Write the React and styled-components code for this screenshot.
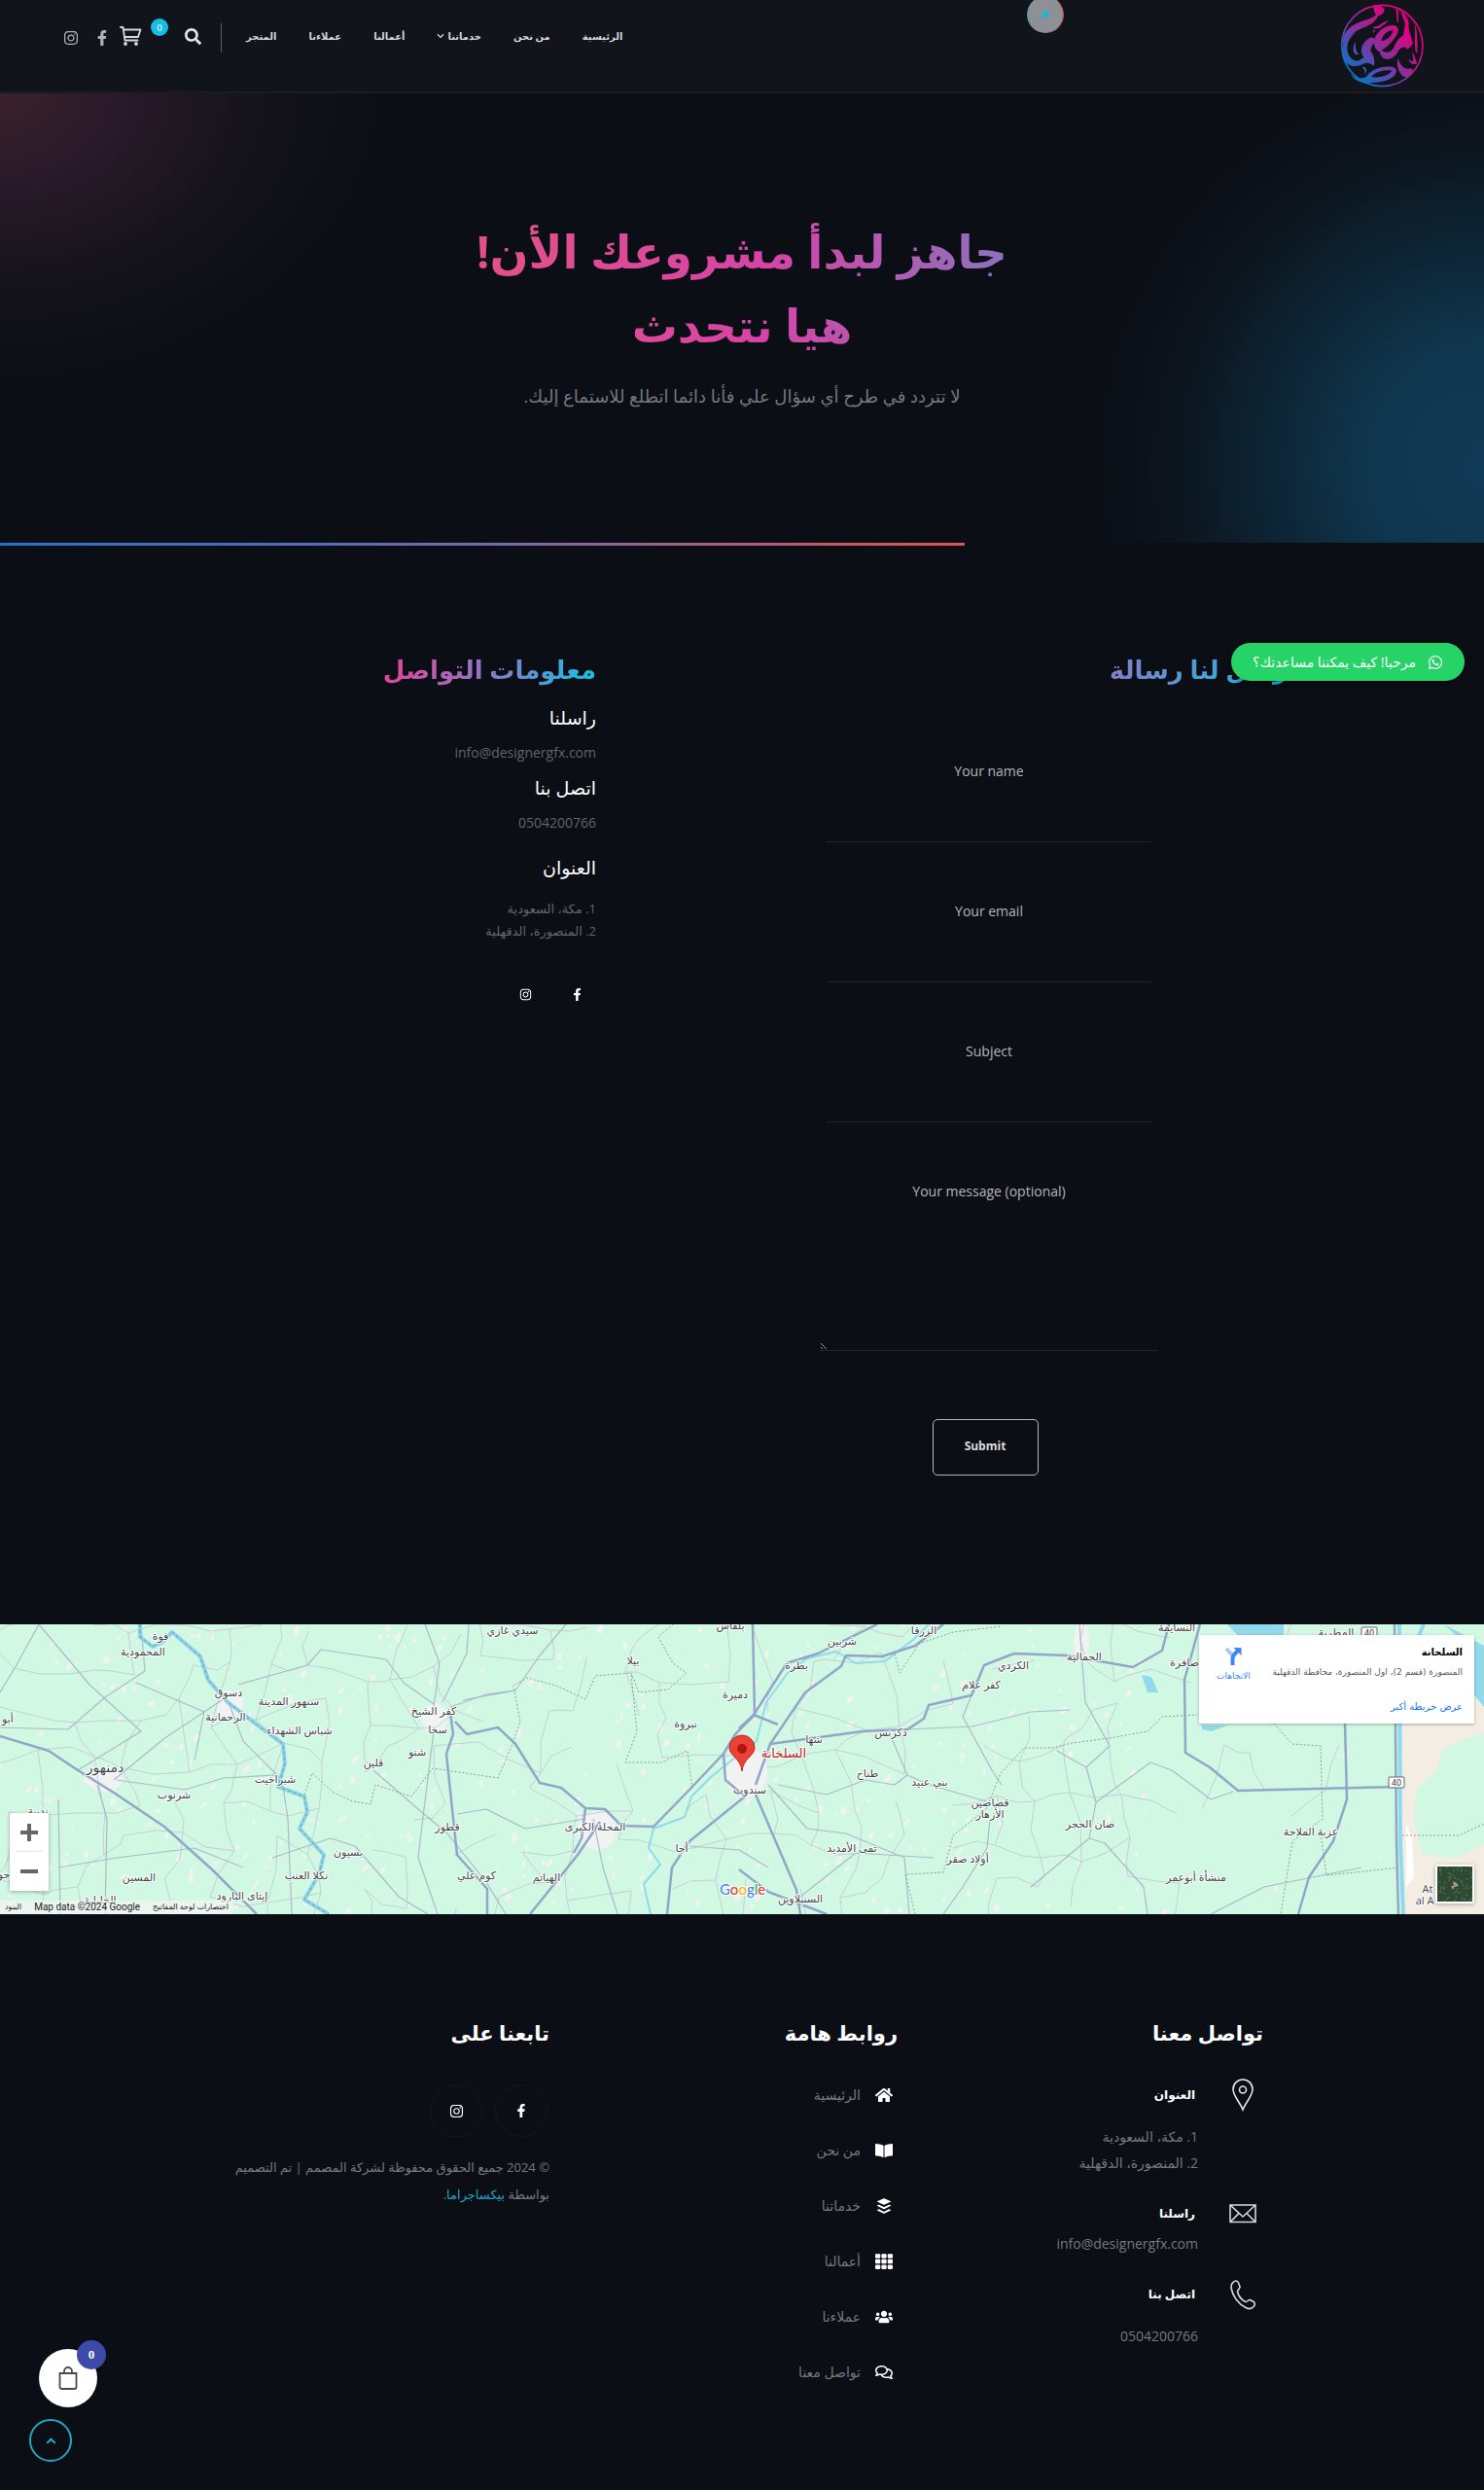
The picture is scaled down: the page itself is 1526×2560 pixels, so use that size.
import React from 'react';
import styled, { createGlobalStyle } from 'styled-components';
import {
  FaBookOpen,
  FaBuffer,
  FaChevronDown,
  FaChevronUp,
  FaFacebookF,
  FaHome,
  FaInstagram,
  FaRegComments,
  FaSearch,
  FaTh,
  FaUsers,
  FaWhatsapp,
} from 'react-icons/fa';

const GlobalStyle = createGlobalStyle`
  * {
    box-sizing: border-box;
  }
  body {
    margin: 0;
    background: #0b0e15;
    color: #fff;
    font-family: 'Open Sans', 'DejaVu Sans', sans-serif;
    font-size: 14px;
  }
  a {
    color: inherit;
    text-decoration: none;
  }
  h1, h2, h3, p, ul {
    margin: 0;
    padding: 0;
  }
  ul {
    list-style: none;
  }
`;

const Page = styled.div`
  position: relative;
  overflow: hidden;
`;

/* ---------- header ---------- */

const Bar = styled.header`
  display: flex;
  justify-content: space-between;
  align-items: flex-start;
  height: 96px;
  padding: 0 56px 0 65px;
  background: #11141b;
  border-bottom: 2px solid #191c20;
`;

const Tools = styled.div`
  display: flex;
  align-items: center;
  padding-top: 20px;
  color: #c3c5c8;
`;

const Nav = styled.nav`
  display: flex;
  gap: 33px;
  color: #d5d6d8;
  font-size: 10px;
  font-weight: bold;
  line-height: 34px;
`;

const NavLink = styled.a`
  display: flex;
  align-items: center;
  gap: 3px;
`;

const Divider = styled.span`
  width: 1px;
  height: 30px;
  margin: 4px 25px 0 20px;
  background: #5c5f64;
`;

const IconButton = styled.button`
  display: flex;
  padding: 0;
  border: 0;
  background: none;
  color: #e4e5e6;
`;

const CartLink = styled.a`
  display: flex;
  gap: 9px;
  margin: 0 17px 0 10px;
`;

const CartCount = styled.span`
  width: 18px;
  height: 18px;
  margin-top: -8px;
  border-radius: 50%;
  background: #16bde4;
  color: #fff;
  font: 11px/18px 'Liberation Serif', serif;
  text-align: center;
`;

const SocialLink = styled.a`
  display: flex;
  margin-left: ${props => props.$gap || 0}px;
  margin-top: 3px;
  color: #b0b2b5;
`;

const Cursor = styled.span`
  position: absolute;
  top: -4px;
  left: 1056px;
  width: 38px;
  height: 38px;
  border-radius: 50%;
  border: 1px solid;
  border-color: #8d9094 #c04a58 #8d9094 #3fa9b8;
  background: radial-gradient(circle, #1fb5d6 0 3px, #8d9094 4px);
`;

/* ---------- hero ---------- */

const Hero = styled.section`
  height: 465px;
  padding-top: 124px;
  text-align: center;
  background:
    linear-gradient(to right, #2672c8, #7568b0 50%, #e0544f) left bottom / 65% 3px no-repeat,
    linear-gradient(#0b0e15, #0b0e15) left bottom / 100% 3px no-repeat,
    radial-gradient(ellipse 400px 410px at 100% 82%, #113a57 0, #0f364e 30%, #0d2535 55%, #0c151e 80%, transparent) no-repeat,
    radial-gradient(ellipse 400px 300px at 0 0, #3a212b, #2a1a29 30%, #15131b 65%, transparent);
`;

const HeroTitle = styled.h1`
  max-width: 1140px;
  margin: 0 auto;
  font-size: 47px;
  line-height: 76px;
  background: linear-gradient(to left, #12c2e9, #8c72bd 26%, #d743a6 48%, #e0508c 70%, #f64f59);
  background-clip: text;
  color: transparent;
`;

const HeroText = styled.p`
  padding-top: 20px;
  color: #75787c;
  font-size: 18px;
  line-height: 30px;
`;

/* ---------- contact ---------- */

const Contact = styled.main`
  display: grid;
  grid-template-columns: 632fr 420fr;
  column-gap: 88px;
  max-width: 1140px;
  margin: 0 auto;
  padding: 102px 0 153px;
`;

const GradientTitle = styled.h2`
  width: ${props => props.$wide ? 66 : 52}%;
  font-size: 26px;
  line-height: 50px;
  background: linear-gradient(to left, #14c1e6, #8b78c4 50%, #e0459c);
  background-clip: text;
  color: transparent;
  white-space: nowrap;
`;

const Form = styled.form`
  display: flex;
  flex-direction: column;
  align-items: center;
  padding-top: 66px;
`;

const Field = styled.div`
  display: flex;
  flex-direction: column;
  align-items: center;
  margin-bottom: 57px;
  color: #b4b6b9;
  font-size: 14px;
  line-height: 28px;
`;

const TextInput = styled.input`
  width: 334px;
  height: 33px;
  margin-top: 26px;
  border: 0;
  border-bottom: 1px solid #20242b;
  background: none;
  color: #fff;
  outline: 0;
`;

const TextArea = styled.textarea`
  width: 348px;
  height: 124px;
  margin-top: 26px;
  border: 0;
  border-bottom: 1px solid #20242b;
  background: none;
  color: #fff;
  outline: 0;
  resize: both;
  color-scheme: dark;
`;

const Submit = styled.button`
  width: 109px;
  height: 58px;
  margin: 13px 8px 0 0;
  padding: 0 0 4px;
  border: 1px solid #b6b8bb;
  border-radius: 5px;
  background: none;
  color: #dcdddf;
  font: bold 12px 'Open Sans', sans-serif;
`;

const InfoTitle = styled.h3`
  font-size: 19px;
  font-weight: normal;
  line-height: 36px;
  margin-top: ${props => props.$gap || 0}px;
`;

const InfoText = styled.p`
  color: #62656a;
  font-size: 14px;
  line-height: 36px;
`;

const InfoAddress = styled.p`
  padding-top: 13px;
  color: #62656a;
  font-size: 13px;
  line-height: 23px;
`;

const InfoSocial = styled.div`
  display: flex;
  gap: 40px;
  padding: 45px 13px 0;
`;

const WhatsApp = styled.a`
  position: absolute;
  top: 661px;
  right: 20px;
  display: flex;
  align-items: center;
  justify-content: center;
  gap: 12px;
  width: 240px;
  height: 39px;
  border-radius: 20px;
  background: #25d366;
  box-shadow: 0 2px 8px rgba(0, 0, 0, 0.4);
  font-size: 14px;
`;

/* ---------- map ---------- */

const MapFrame = styled.section`
  position: relative;
  height: 298px;
  overflow: hidden;
  background: #d1f8e2;
`;

const MapDrawing = styled.svg`
  position: absolute;
  top: 0;
  left: 50%;
  width: 1526px;
  min-width: 100%;
  height: 298px;
  transform: translateX(-50%);
`;

const MapCard = styled.div`
  position: absolute;
  top: 11px;
  right: 10px;
  display: flex;
  justify-content: space-between;
  width: 283px;
  height: 91px;
  padding: 8px 12px 0 18px;
  background: #fff;
  box-shadow: 0 1px 3px rgba(0, 0, 0, 0.3);
  color: #5b5b5b;
  font: 9px/20px 'DejaVu Sans', sans-serif;
`;

const PlaceName = styled.h3`
  color: #000;
  font-size: 10px;
  line-height: 20px;
`;

const MapLink = styled.a`
  display: block;
  color: #1a73e8;
  font-size: 10px;
  padding-top: ${props => props.$gap}px;
`;

const Directions = styled.a`
  display: flex;
  flex-direction: column;
  align-items: center;
  padding-top: 4px;
  color: #4285f4;
`;

const Zoom = styled.div`
  position: absolute;
  top: 194px;
  left: 10px;
  width: 40px;
  padding: 0 6px;
  background: #fff;
  box-shadow: 0 1px 4px rgba(0, 0, 0, 0.3);
`;

const ZoomButton = styled.button`
  display: flex;
  align-items: center;
  justify-content: center;
  width: 28px;
  height: 40px;
  padding: 0;
  border: 0;
  border-bottom: ${props => props.$line ? '1px solid #e6e6e6' : 0};
  background: none;
`;

const Satellite = styled.button`
  position: absolute;
  right: 10px;
  bottom: 11px;
  width: 40px;
  height: 40px;
  padding: 0;
  border: 2px solid #fff;
  border-radius: 2px;
  box-shadow: 0 1px 4px rgba(0, 0, 0, 0.3);
  overflow: hidden;
`;

const MapTerms = styled.div`
  position: absolute;
  left: 0;
  bottom: 0;
  display: flex;
  flex-direction: row-reverse;
  justify-content: flex-end;
  gap: 13px;
  padding: 0 5px;
  background: rgba(245, 245, 245, 0.7);
  color: #222;
  font: 10px/14px Roboto, 'DejaVu Sans', sans-serif;
`;

const SmallArabic = styled.a`
  font-size: 8px;
`;

/* ---------- footer ---------- */

const Footer = styled.footer`
  display: grid;
  grid-template-columns: 376fr 358fr 338fr;
  max-width: 1072px;
  min-height: 592px;
  margin: 0 auto;
  padding-top: 99px;
  color: #77797d;
`;

const FooterTitle = styled.h2`
  color: #fff;
  font-size: 21px;
  line-height: 46px;
`;

const ContactItem = styled.div`
  display: grid;
  grid-template-columns: 42px auto;
  justify-content: start;
  column-gap: 25px;
  padding-top: ${props => props.$gap}px;
  font-size: 14px;
  line-height: 27px;
`;

const ContactIcon = styled.span`
  display: flex;
  align-items: center;
  justify-content: center;
  height: 34px;
`;

const ContactName = styled.h3`
  padding: 0 3px;
  color: #fff;
  font-size: 12px;
  line-height: 34px;
`;

const ContactText = styled.div`
  grid-column: 2;
  padding-top: ${props => props.$gap || 0}px;
`;

const Links = styled.ul`
  padding: 12px 5px 0;
`;

const FooterLink = styled.a`
  display: flex;
  align-items: center;
  gap: 15px;
  height: 57px;
  font-size: 14px;

  svg {
    color: #fff;
  }
`;

const Circles = styled.div`
  display: flex;
  gap: 13px;
  padding: 30px 2px 17px;
`;

const CircleLink = styled.a`
  display: flex;
  align-items: center;
  justify-content: center;
  width: 54px;
  height: 54px;
  border: 1px solid #14171d;
  border-radius: 50%;
  color: #fff;
`;

const Copyright = styled.p`
  font-size: 13px;
  line-height: 28px;

  a {
    color: #1fa3c4;
  }
`;

const Bag = styled.a`
  position: absolute;
  left: 40px;
  bottom: 85px;
  display: flex;
  align-items: center;
  justify-content: center;
  width: 60px;
  height: 60px;
  border-radius: 50%;
  background: #fff;
`;

const BagCount = styled.span`
  position: absolute;
  top: -9px;
  left: 39px;
  width: 30px;
  height: 30px;
  border-radius: 50%;
  background: #3c4aa8;
  font: bold 13px/30px 'Liberation Serif', serif;
  text-align: center;
`;

const BackTop = styled.a`
  position: absolute;
  left: 30px;
  bottom: 29px;
  display: flex;
  align-items: center;
  justify-content: center;
  width: 44px;
  height: 44px;
  border: 2px solid #22a6c3;
  border-radius: 50%;
  color: #22b8d8;
`;

const menu = ['الرئيسية', 'من نحن', 'خدماتنا', 'أعمالنا', 'عملاءنا', 'المتجر'];

const fields = [
  { id: 'name', label: 'Your name', type: 'text' },
  { id: 'email', label: 'Your email', type: 'email' },
  { id: 'subject', label: 'Subject', type: 'text' },
];

const footerLinks = [
  { text: 'الرئيسية', Icon: FaHome },
  { text: 'من نحن', Icon: FaBookOpen },
  { text: 'خدماتنا', Icon: FaBuffer },
  { text: 'أعمالنا', Icon: FaTh },
  { text: 'عملاءنا', Icon: FaUsers },
  { text: 'تواصل معنا', Icon: FaRegComments },
];

const places = [
  [165, 12, 'فوة'], [147, 28, 'المحمودية'], [235, 70, 'دسوق'], [297, 79, 'سنهور المدينة'],
  [232, 95, 'الرحمانية'], [308, 109, 'شباس الشهداء'], [446, 89, 'كفر الشيخ'], [450, 108, 'سخا'],
  [429, 131, 'شنو'], [384, 142, 'قلين'], [108, 148, 'دمنهور', 14], [283, 159, 'شبراخيت'],
  [179, 175, 'شرنوب'], [460, 208, 'قطور'], [612, 208, 'المحلة الكبرى'], [701, 230, 'أجا'],
  [358, 234, 'بسيون'], [315, 258, 'نكلا العنب'], [490, 258, 'كوم علي'], [562, 260, 'الهياتم'],
  [143, 260, 'المسين'], [249, 279, 'إيتاى البارود'], [103, 283, 'الخليلية'], [527, 6, 'سيدي غازي'],
  [651, 37, 'بيلا'], [756, 72, 'دميرة'], [705, 102, 'نبروة'], [751, 1, 'بلقاس'], [8, 97, 'أبو'],
  [39, 192, 'ندبية'], [4, 257, 'حو'], [771, 170, 'سندوب'], [866, 17, 'شربين'], [950, 6, 'الزرقا'],
  [819, 42, 'بطرة'], [1042, 42, 'الكردي'], [1115, 33, 'الجمالية'], [1009, 62, 'كفر علام'],
  [916, 111, 'دكرنس'], [837, 118, 'شها'], [892, 153, 'طناح'], [956, 162, 'بني عبيد'],
  [1018, 183, 'قصاصين'], [1018, 195, 'الأزهار'], [1121, 205, 'صان الحجر'], [1348, 213, 'عزبة الملاحة'],
  [876, 230, 'تمى الأمديد'], [995, 241, 'أولاد صقر'], [1230, 260, 'منشأة أبوعمر'],
  [823, 282, 'السنبلاوين'], [1210, 3, 'النسايمة'], [1374, 8, 'المطرية'], [1218, 39, 'صافرة'],
  [1468, 272, 'At'], [1465, 284, 'al A'],
];

const highways = [
  '0,115 50,130 80,150 117,173 169,208 219,253 264,298',
  '463,90 466,113 459,133 470,237 501,272 501,298',
  '468,100 480,113 512,106 530,123 555,163 577,168 602,189 622,190 639,207 672,208 709,170 744,133 756,113 776,93 774,0',
  '617,203 594,237 545,298',
  '602,189 598,220 590,235',
  '766,177 709,223 691,250 686,298',
  '744,133 746,160 766,177',
  '760,107 775,93 809,40 841,30 902,0',
  '775,93 800,103',
  '777,165 792,123 828,70 865,43 870,32 907,33 941,22 970,0',
  '792,123 887,110 933,108 950,97 955,83 999,73 1012,42 1043,30 1097,32 1165,44 1195,27 1202,0',
  '777,175 819,273 823,298',
  '760,252 790,275 850,298',
  '1234,0 1218,57 1219,132 1244,147 1273,171 1436,167',
  '1383,102 1385,180 1371,223 1346,260 1335,298',
  '1434,0 1436,223 1438,298',
];

const roads = [
  '0,70 18,40 40,0', '40,0 92,62 145,110 80,150', '145,0 149,48 108,75 70,108 0,106',
  '245,62 316,42 330,26 397,36 415,60 446,82', '117,160 168,118 240,70', '235,80 250,120 290,160 296,200 300,298',
  '446,85 452,40 437,0', '455,80 480,30 482,0', '463,85 500,72 530,68 555,32 582,0', '476,78 530,68',
  '120,160 190,170 230,158 283,155', '384,150 430,190 460,215 500,265 520,298', '446,110 436,190 430,240 450,298',
  '470,195 500,190 540,210 602,200', '610,200 620,250 635,298', '709,228 760,232 790,250',
  '1110,0 1116,80 1141,125 1117,147 1127,183 1120,220 1136,225 1176,270 1180,298',
  '1087,130 1117,147', '1127,183 1183,142 1205,150 1245,180 1268,172', '999,73 990,95 1020,150 1030,165',
  '916,115 933,155 956,165 1014,182', '933,155 920,165 890,160 850,175 800,165', '790,165 830,210 870,215 930,240 935,298',
  '932,108 1000,105 1060,90 1100,88', '1018,200 1015,230 990,270 970,298', '1060,270 1120,220',
  '823,280 880,235 960,240', '1245,298 1300,270 1400,250', '280,240 340,220 365,228 410,280 440,298',
  '60,180 62,298', '100,165 110,200 108,298', '60,250 120,240 200,230 250,250', '200,140 210,90 140,60',
];

const borders = [
  '313,175 321,153 343,173 363,182 381,185 386,165 423,177 445,148 512,158 527,123 535,100 528,63 542,55 572,63 602,77 612,53 649,50 657,70 687,67 706,50 692,40 677,13 692,0',
  '649,52 655,110 643,142 680,142 707,130 712,170',
  '941,298 931,257 970,255 980,217 1014,190 1029,153 1053,127 1082,127 1102,122 1141,117 1180,110 1195,95 1231,93',
  '1310,102 1329,123 1358,125 1360,200 1329,223 1317,298',
  '1358,215 1364,258 1440,250', '1442,217 1500,217 1526,205', '920,30 925,50 945,20 980,8 1030,2',
];

const eastCanal = '731,157 752,140 778,120 788,80 810,50 830,35 860,28 880,40 910,38 940,15 955,0';
const nile = '144,0 144,13 157,23 167,18 177,8 206,33 214,57 234,80 264,103 291,123 293,143 286,167 313,177 316,193 308,210 333,237 328,257 313,283 338,298';
const branch = '731,157 711,177 704,198 672,210 667,230 679,247 662,267 669,298';

// minor tracks and villages, seeded so every render draws the same countryside
function countryside() {
  let seed = 7;
  const rand = () => {
    seed = (seed * 16807) % 2147483647;
    return seed / 2147483647;
  };
  const step = 46;
  const points = [];
  for (let row = 0; row < 8; row++) {
    points.push([]);
    for (let col = 0; col < 32; col++) {
      points[row].push([Math.round(col * step + rand() * 34 - 17), Math.round(row * step + rand() * 34 - 17)]);
    }
  }
  const tracks = [];
  const villages = [];
  const join = (a, b) => {
    const x = Math.round((a[0] + b[0]) / 2 + rand() * 14 - 7);
    const y = Math.round((a[1] + b[1]) / 2 + rand() * 14 - 7);
    tracks.push(`${a} ${x},${y} ${b}`);
  };
  points.forEach((line, row) => line.forEach((p, col) => {
    const sparse = p[0] > 1180 ? 0.12 : 0.62;
    if (line[col + 1] && rand() < sparse) join(p, line[col + 1]);
    if (points[row + 1] && rand() < sparse) join(p, points[row + 1][col]);
  }));
  for (let i = 0; i < 420; i++) {
    const x = rand() * 1430;
    if (x < 1180 || rand() < 0.15) villages.push([x, rand() * 298, 1 + rand() * 2, 1 + rand() * 4]);
  }
  return { tracks, villages };
}

const land = countryside();

const Logo = () => (
  <svg width="98" height="96" viewBox="0 0 294 288" fill="none" aria-label="المصمم">
    <defs>
      <linearGradient id="ink" gradientUnits="userSpaceOnUse" x1="55" y1="220" x2="205" y2="70">
        <stop offset="0" stopColor="#0c72c4" />
        <stop offset="0.5" stopColor="#8a2f9c" />
        <stop offset="1" stopColor="#e3007f" />
      </linearGradient>
    </defs>
    <circle cx="148" cy="141" r="125" stroke="url(#ink)" strokeWidth="5" />
    <g fill="url(#ink)">
      <path d="M118 22 C132 14 152 18 155 30 C154 40 146 47 136 48 C130 64 112 78 84 88 C64 96 44 112 26 138 C22 104 46 80 78 68 C102 60 122 54 129 44 C120 38 126 28 118 22Z" />
      <path d="M68 100 C44 116 34 142 44 168 C54 190 74 194 91 176 C82 164 80 148 92 132 C106 112 126 110 126 126 C120 138 112 146 112 158 C122 168 126 182 123 204 C112 196 102 192 92 196 C66 212 36 204 26 176 C18 140 34 112 68 100Z" />
      <path fillRule="evenodd" d="M122 132 C124 104 150 80 180 78 C200 78 202 96 190 112 C178 130 164 146 146 154 C156 166 174 164 184 146 C190 132 196 120 214 108 C214 90 222 78 216 64 C210 50 206 42 208 32 C218 46 232 60 230 78 C228 92 236 106 240 124 C246 136 238 142 226 152 C212 138 202 150 196 160 C182 188 146 192 140 160 C130 156 124 146 122 132Z M145 126 C148 108 164 94 182 92 C178 110 164 124 145 126Z" />
      <path fillRule="evenodd" d="M98 238 C114 212 148 202 178 206 C200 210 194 230 174 242 C150 256 122 252 102 258 C76 254 62 246 50 228 C66 240 80 244 98 238Z M114 238 C130 218 158 214 178 218 C170 232 144 240 114 238Z" />
      <path d="M196 180 C202 196 214 216 232 212 C240 208 246 218 240 228 C230 242 212 242 204 226 C196 214 192 196 196 180Z" />
      <path d="M190 26 L197 30 L198 72 L194 66Z M246 64 C256 92 258 126 256 166 L250 156 C248 120 252 92 246 64Z" />
      <path d="M120 86 C128 92 132 86 142 86 C150 74 162 78 168 56 C164 70 150 66 142 76 C136 84 128 78 120 86Z M118 92 L126 94 L122 102Z" />
      <path d="M66 128 C50 154 62 176 80 166 C70 168 64 150 66 128Z M240 160 C250 172 250 186 256 194 C244 204 226 192 232 180 C236 196 246 190 244 180Z M84 208 C96 202 106 214 94 232 C96 220 94 212 84 208Z" />
    </g>
  </svg>
);

const CartIcon = () => (
  <svg width="23" height="20" viewBox="0 0 23 20" fill="none" stroke="#d6d7d9" strokeWidth="1.800" strokeLinecap="round" strokeLinejoin="round">
    <path d="M1 1h2.500l2 13.500h13M4 3.500h17.500l-2.500 7.500H5.200" />
    <circle cx="6" cy="18" r="1" fill="#d6d7d9" />
    <circle cx="17" cy="18" r="1" fill="#d6d7d9" />
  </svg>
);

const PinIcon = () => (
  <svg width="22" height="34" viewBox="0 0 22 34" fill="none" stroke="#e4e5e6" strokeWidth="1.600">
    <path d="M11 32 C8 24 1 18 1 11 a10 10 0 0 1 20 0 C21 18 14 24 11 32Z" />
    <circle cx="11" cy="11.500" r="3.500" />
  </svg>
);

const MailIcon = () => (
  <svg width="28" height="20" viewBox="0 0 28 20" fill="none" stroke="#d6d7d9" strokeWidth="1.600">
    <path d="M1 1h26v17.500H1zM1 1l13 12L27 1M1 18.500l9-9M27 18.500l-9-9" />
  </svg>
);

const PhoneIcon = () => (
  <svg width="26" height="31" viewBox="0 0 26 31" fill="none" stroke="#d6d7d9" strokeWidth="1.600" strokeLinejoin="round">
    <path d="M3 2.500 C5 .5 7.500 .5 8.500 3 L10 7 C10.500 9 7.500 10 7.500 12 C8.500 16.500 12 20.500 15.500 22.500 C17.500 23 18.500 20 20.500 20.500 L24 22.500 C26 24 25.500 26 24 27.500 C22 30 19 30 16 28.500 C9 25 2.500 17 1.200 9 C.8 6 1 4 3 2.500Z" />
  </svg>
);

const BagIcon = () => (
  <svg width="20" height="26" viewBox="0 0 20 26" fill="none" stroke="#4a4a4a" strokeWidth="1.800">
    <path d="M1.500 8h17v14a2 2 0 0 1-2 2h-13a2 2 0 0 1-2-2zM6 8V6a4 4 0 0 1 8 0v2" />
  </svg>
);

const DirectionsIcon = () => (
  <svg width="18" height="20" viewBox="0 0 18 20" fill="none">
    <path d="M2 2 L9 9.500" stroke="#a8c5fa" strokeWidth="4" />
    <path d="M8.500 19 V12 C8.500 9 10 8 14 4" stroke="#4285f4" strokeWidth="4" />
    <path d="M9.500 1 H17.500 V9Z" fill="#4285f4" />
  </svg>
);

const Map = () => (
  <MapDrawing viewBox="0 0 1526 298" preserveAspectRatio="xMidYMid slice" direction="ltr">
    <rect width="1526" height="298" fill="#d1f8e2" />
    <polygon points="1438,0 1526,0 1526,298 1442,298" fill="#f4ede4" />
    <polygon points="1440,0 1526,0 1526,85 1500,60 1485,102 1440,102" fill="#d1f8e2" />
    <polygon points="1526,112 1500,120 1483,128 1478,150 1456,170 1454,203 1463,237 1500,240 1526,225" fill="#d1f8e2" />
    <polygon points="1446,205 1452,220 1454,260 1446,270" fill="#fff" />
    <polygon points="1262,0 1320,0 1320,14 1275,14" fill="#90daee" />
    <polygon points="1485,0 1526,22 1526,85 1508,62 1500,14" fill="#90daee" />
    <polygon points="1236,104 1262,104 1246,110 1236,108" fill="#90daee" />
    <polygon points="1174,52 1184,54 1191,70 1180,70" fill="#90daee" />
    <g fill="#f1f3f2">
      {land.villages.map(([x, y, rx, ry], i) => <ellipse key={i} cx={x} cy={y} rx={rx} ry={ry} transform={`rotate(${(i * 37) % 50} ${x} ${y})`} />)}
      <ellipse cx="447" cy="97" rx="13" ry="16" />
      <ellipse cx="108" cy="160" rx="18" ry="12" />
      <ellipse cx="614" cy="212" rx="20" ry="20" />
      <ellipse cx="767" cy="152" rx="22" ry="26" />
      <ellipse cx="236" cy="82" rx="14" ry="14" />
      <ellipse cx="1112" cy="18" rx="8" ry="20" />
    </g>
    <g fill="none" strokeLinejoin="round">
      <g stroke="#c3d0d6">{land.tracks.map(points => <polyline key={points} points={points} />)}</g>
      <g stroke="#adb9cb" strokeWidth="1.200">{roads.map(points => <polyline key={points} points={points} />)}</g>
      <polyline points={nile} stroke="#8fd2e6" strokeWidth="4" />
      <polyline points={nile} stroke="#5fa3ba" strokeDasharray="3 3" />
      <polyline points={eastCanal} stroke="#90daee" strokeWidth="2" />
      <polyline points={branch} stroke="#90daee" strokeWidth="2" />
      <polyline points="1439,0 1440,223 1443,298" stroke="#90daee" strokeWidth="4" />
      <polyline points="1464,0 1458,14" stroke="#90daee" strokeWidth="4" />
      <g stroke="#92a7c8" strokeWidth="2.500">{highways.map(points => <polyline key={points} points={points} />)}</g>
      <g stroke="#87a095" strokeDasharray="2 2">{borders.map(points => <polyline key={points} points={points} />)}</g>
    </g>
    <g fill="#41464a" stroke="#fff" strokeWidth="2" strokeLinejoin="round" paintOrder="stroke" textAnchor="middle" fontFamily="'Open Sans', 'DejaVu Sans', sans-serif">
      {places.map(([x, y, name, size]) => <text key={name} x={x} y={y + 4} fontSize={size || 11}>{name}</text>)}
      <text x="806" y="137" fontSize="13" fill="#c5221f">السلخانة</text>
    </g>
    <path d="M763 151 C762 138 750 135 750 127 a13 13 0 0 1 26 0 C776 135 764 138 763 151Z" fill="#ea4335" stroke="#c5221f" />
    <circle cx="763" cy="128" r="5" fill="#b31412" />
    <rect x="1428" y="157" width="16" height="11" rx="1" fill="#fff" stroke="#666" />
    <rect x="1400" y="3" width="16" height="11" rx="1" fill="#fff" stroke="#666" />
    <g fill="#444" fontSize="9" textAnchor="middle" fontFamily="Roboto, sans-serif">
      <text x="1436" y="166">40</text>
      <text x="1408" y="12">40</text>
    </g>
    <text x="740" y="278" fontSize="15" fontWeight="500" fontFamily="Lato, sans-serif" stroke="#fff" strokeWidth="2" paintOrder="stroke">
      <tspan fill="#4285f4">G</tspan><tspan fill="#ea4335">o</tspan><tspan fill="#fbbc04">o</tspan><tspan fill="#4285f4">g</tspan><tspan fill="#34a853">l</tspan><tspan fill="#ea4335">e</tspan>
    </text>
  </MapDrawing>
);

const SatelliteDrawing = () => (
  <svg width="36" height="36" viewBox="0 0 36 36">
    <rect width="36" height="36" fill="#2f4a33" />
    <g fill="#4f6b4b">
      {land.villages.slice(0, 60).map(([x, y], i) => <circle key={i} cx={x % 36} cy={y % 36} r="1" />)}
    </g>
    <path d="M16 15l4 2 2 3-5 1zM14 20l4 0-2 4z" fill="#a79c8c" />
  </svg>
);

const Header = () => (
  <Bar>
    <a href="#home"><Logo /></a>
    <Tools>
      <Nav>
        {menu.map(item => (
          <NavLink key={item} href="#menu">
            {item}
            {item === 'خدماتنا' && <FaChevronDown size={8} />}
          </NavLink>
        ))}
      </Nav>
      <Divider />
      <IconButton aria-label="بحث"><FaSearch size={17} /></IconButton>
      <CartLink href="#cart">
        <CartCount>0</CartCount>
        <CartIcon />
      </CartLink>
      <SocialLink href="#facebook" $gap={16}><FaFacebookF size={16} /></SocialLink>
      <SocialLink href="#instagram"><FaInstagram size={16} /></SocialLink>
    </Tools>
  </Bar>
);

const ContactForm = () => (
  <Form onSubmit={e => e.preventDefault()}>
    {fields.map(field => (
      <Field key={field.id}>
        <label htmlFor={field.id}>{field.label}</label>
        <TextInput id={field.id} type={field.type} />
      </Field>
    ))}
    <Field>
      <label htmlFor="message" dir="ltr">Your message (optional)</label>
      <TextArea id="message" />
    </Field>
    <Submit type="submit">Submit</Submit>
  </Form>
);

const App = () => (
  <Page dir="rtl" lang="ar">
    <GlobalStyle />
    <Header />
    <Hero>
      <HeroTitle>جاهز لبدأ مشروعك الأن!<br />هيا نتحدث</HeroTitle>
      <HeroText>لا تتردد في طرح أي سؤال علي فأنا دائما اتطلع للاستماع إليك.</HeroText>
    </Hero>
    <Contact>
      <section>
        <GradientTitle $wide>أرسل لنا رسالة</GradientTitle>
        <ContactForm />
      </section>
      <section>
        <GradientTitle>معلومات التواصل</GradientTitle>
        <InfoTitle $gap={7}>راسلنا</InfoTitle>
        <InfoText>info@designergfx.com</InfoText>
        <InfoTitle>اتصل بنا</InfoTitle>
        <InfoText>0504200766</InfoText>
        <InfoTitle $gap={10}>العنوان</InfoTitle>
        <InfoAddress>1. مكة، السعودية<br />2. المنصورة، الدقهلية</InfoAddress>
        <InfoSocial>
          <a href="#facebook"><FaFacebookF size={13} /></a>
          <a href="#instagram"><FaInstagram size={13} /></a>
        </InfoSocial>
      </section>
    </Contact>
    <MapFrame>
      <Map />
      <MapCard>
        <div>
          <PlaceName>السلخانة</PlaceName>
          المنصورة (قسم 2)، اول المنصورة، محافظة الدقهلية
          <MapLink href="#map" $gap={16}>عرض خريطة أكبر</MapLink>
        </div>
        <Directions href="#directions">
          <DirectionsIcon />
          الاتجاهات
        </Directions>
      </MapCard>
      <Zoom>
        <ZoomButton $line aria-label="تكبير">
          <svg width="18" height="18"><path d="M9 0v18M0 9h18" stroke="#666" strokeWidth="4" /></svg>
        </ZoomButton>
        <ZoomButton aria-label="تصغير">
          <svg width="18" height="18"><path d="M0 9h18" stroke="#666" strokeWidth="4" /></svg>
        </ZoomButton>
      </Zoom>
      <Satellite aria-label="قمر صناعي"><SatelliteDrawing /></Satellite>
      <MapTerms>
        <SmallArabic href="#terms">البنود</SmallArabic>
        <span dir="ltr">Map data ©2024 Google</span>
        <SmallArabic href="#keys">اختصارات لوحة المفاتيح</SmallArabic>
      </MapTerms>
    </MapFrame>
    <Footer>
      <section>
        <FooterTitle>تواصل معنا</FooterTitle>
        <ContactItem $gap={24}>
          <ContactIcon><PinIcon /></ContactIcon>
          <ContactName>العنوان</ContactName>
          <ContactText $gap={12}>1. مكة، السعودية<br />2. المنصورة، الدقهلية</ContactText>
        </ContactItem>
        <ContactItem $gap={22}>
          <ContactIcon><MailIcon /></ContactIcon>
          <ContactName>راسلنا</ContactName>
          <ContactText>info@designergfx.com</ContactText>
        </ContactItem>
        <ContactItem $gap={22}>
          <ContactIcon><PhoneIcon /></ContactIcon>
          <ContactName>اتصل بنا</ContactName>
          <ContactText $gap={12}>0504200766</ContactText>
        </ContactItem>
      </section>
      <section>
        <FooterTitle>روابط هامة</FooterTitle>
        <Links>
          {footerLinks.map(({ text, Icon }) => (
            <li key={text}><FooterLink href="#page"><Icon size={18} />{text}</FooterLink></li>
          ))}
        </Links>
      </section>
      <section>
        <FooterTitle>تابعنا على</FooterTitle>
        <Circles>
          <CircleLink href="#facebook"><FaFacebookF size={14} /></CircleLink>
          <CircleLink href="#instagram"><FaInstagram size={15} /></CircleLink>
        </Circles>
        <Copyright>
          © 2024 جميع الحقوق محفوظة لشركة المصمم | تم التصميم بواسطة <a href="#author">بيكساجراما</a>.
        </Copyright>
      </section>
    </Footer>
    <Cursor />
    <WhatsApp href="#whatsapp"><FaWhatsapp size={16} />مرحبا! كيف يمكننا مساعدتك؟</WhatsApp>
    <Bag href="#bag"><BagIcon /><BagCount>0</BagCount></Bag>
    <BackTop href="#top"><FaChevronUp size={11} /></BackTop>
  </Page>
);

export default App;
